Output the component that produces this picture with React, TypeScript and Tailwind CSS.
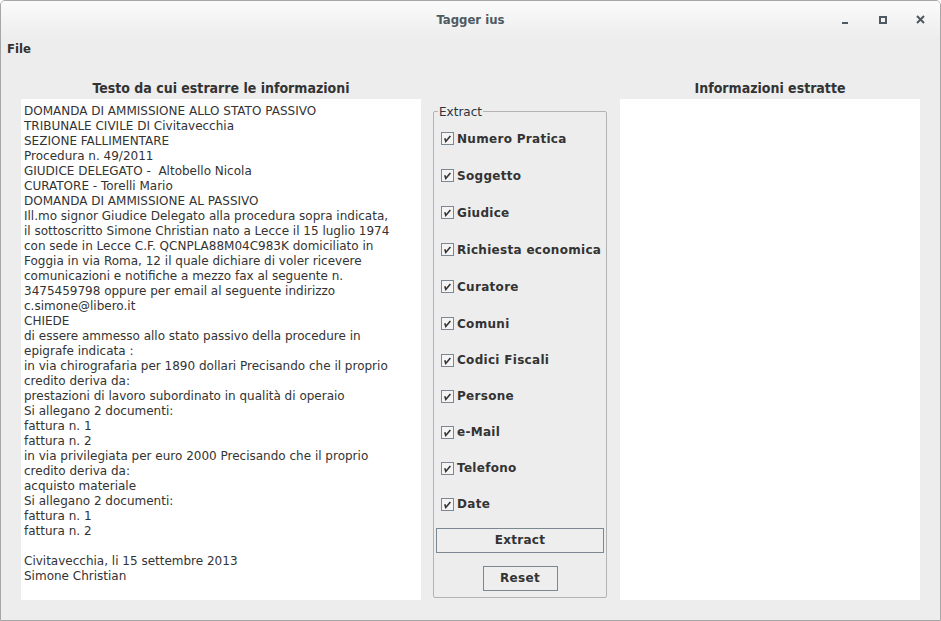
import React from 'react';

const lines = [
  'DOMANDA DI AMMISSIONE ALLO STATO PASSIVO',
  'TRIBUNALE CIVILE DI Civitavecchia',
  'SEZIONE FALLIMENTARE',
  'Procedura n. 49/2011',
  'GIUDICE DELEGATO -  Altobello Nicola',
  'CURATORE - Torelli Mario',
  'DOMANDA DI AMMISSIONE AL PASSIVO',
  'Ill.mo signor Giudice Delegato alla procedura sopra indicata,',
  'il sottoscritto Simone Christian nato a Lecce il 15 luglio 1974',
  'con sede in Lecce C.F. QCNPLA88M04C983K domiciliato in',
  'Foggia in via Roma, 12 il quale dichiare di voler ricevere',
  'comunicazioni e notifiche a mezzo fax al seguente n.',
  '3475459798 oppure per email al seguente indirizzo',
  'c.simone@libero.it',
  'CHIEDE',
  'di essere ammesso allo stato passivo della procedure in',
  'epigrafe indicata :',
  'in via chirografaria per 1890 dollari Precisando che il proprio',
  'credito deriva da:',
  'prestazioni di lavoro subordinato in qualità di operaio',
  'Si allegano 2 documenti:',
  'fattura n. 1',
  'fattura n. 2',
  'in via privilegiata per euro 2000 Precisando che il proprio',
  'credito deriva da:',
  'acquisto materiale',
  'Si allegano 2 documenti:',
  'fattura n. 1',
  'fattura n. 2',
  '',
  'Civitavecchia, li 15 settembre 2013',
  'Simone Christian',
];

const options = [
  'Numero Pratica',
  'Soggetto',
  'Giudice',
  'Richiesta economica',
  'Curatore',
  'Comuni',
  'Codici Fiscali',
  'Persone',
  'e-Mail',
  'Telefono',
  'Date',
];

const font = { fontFamily: '"DejaVu Sans", sans-serif' };
const condensed = { fontFamily: '"DejaVu Sans Condensed", "DejaVu Sans", sans-serif' };

const CheckBox: React.FC<{ label: string; tall: boolean }> = ({ label, tall }) => (
  <div className={`flex items-center pl-[7px] ${tall ? 'h-[37px]' : 'h-[36px]'}`}>
    <span className="w-[13px] h-[13px] border border-[#7b8893] bg-[#f4f4f4] flex items-center justify-center">
      <svg width="9" height="9" viewBox="0 0 9 9">
        <path d="M1.8 4.2 L2.8 7.4 L7.4 2" stroke="#333" strokeWidth="1.6" fill="none" />
      </svg>
    </span>
    <span className="ml-[3px] text-[12px] font-bold tracking-[0.3px] text-[#333]" style={font}>{label}</span>
  </div>
);

export default function App() {
  return (
    <div className="w-[941px] h-[621px] bg-[#ededed] border border-[#a6a6a6] rounded-t-[5px] flex flex-col overflow-hidden">
      {/* title bar */}
      <div className="h-[37px] shrink-0 bg-gradient-to-b from-[#fbfbfb] to-[#ededed] flex items-center relative">
        <div className="flex-1 text-center text-[13px] font-bold text-[#4e5962]" style={condensed}>Tagger ius</div>
        <div className="absolute right-0 top-0 h-full flex items-center">
          <div className="w-[38px] flex justify-center pt-[6px]">
            <span className="w-[6px] h-[2px] bg-[#4e5962]" />
          </div>
          <div className="w-[38px] flex justify-center">
            <span className="w-[8px] h-[8px] border-2 border-[#4e5962]" />
          </div>
          <div className="w-[38px] flex justify-center pr-[2px]">
            <svg width="9" height="9" viewBox="0 0 9 9">
              <path d="M1 1 L8 8 M8 1 L1 8" stroke="#4e5962" strokeWidth="2" />
            </svg>
          </div>
        </div>
      </div>

      {/* menu */}
      <div className="h-[21px] shrink-0 flex items-center px-[6px] text-[13px] font-bold text-[#333]" style={condensed}>
        File
      </div>

      {/* content */}
      <div className="flex-1 flex px-[20px] gap-[12px] pt-[20px] pb-[20px]">
        <div className="w-[400px] flex flex-col">
          <div className="h-[20px] leading-[18px] text-center text-[14px] font-bold text-[#333]" style={condensed}>
            Testo da cui estrarre le informazioni
          </div>
          <div className="flex-1 bg-white pt-[5px] pl-[3px] text-[12px] leading-[15px] text-[#333]" style={font}>
            {lines.map((l, i) => (
              <div key={i} className="h-[15px] whitespace-pre">{l}</div>
            ))}
          </div>
        </div>

        <div className="w-[174px] flex flex-col pt-[32px] pb-[2px]">
          <div className="flex-1 border border-[#b3b3b3] rounded-[2px] relative flex flex-col pt-[8px]">
            <span className="absolute -top-[7px] left-[4px] px-[1px] bg-[#ededed] text-[12px] leading-[15px] text-[#2c3340]" style={font}>
              Extract
            </span>
            {options.map((o, i) => (
              <CheckBox key={o} label={o} tall={i < 6} />
            ))}
            <div className="px-[2px] mt-[4px]">
              <button className="w-full h-[25px] border border-[#7b8893] bg-[#eeeeee] text-[12px] font-bold tracking-[0.3px] text-[#333]" style={font}>
                Extract
              </button>
            </div>
            <div className="flex justify-center mt-[13px]">
              <button className="w-[75px] h-[25px] border border-[#7b8893] bg-[#eeeeee] text-[12px] font-bold tracking-[0.3px] text-[#333]" style={font}>
                Reset
              </button>
            </div>
          </div>
        </div>

        <div className="w-[300px] flex flex-col ml-[1px]">
          <div className="h-[20px] leading-[18px] text-center text-[14px] font-bold text-[#333]" style={condensed}>
            Informazioni estratte
          </div>
          <div className="flex-1 bg-white" />
        </div>
      </div>
    </div>
  );
}
